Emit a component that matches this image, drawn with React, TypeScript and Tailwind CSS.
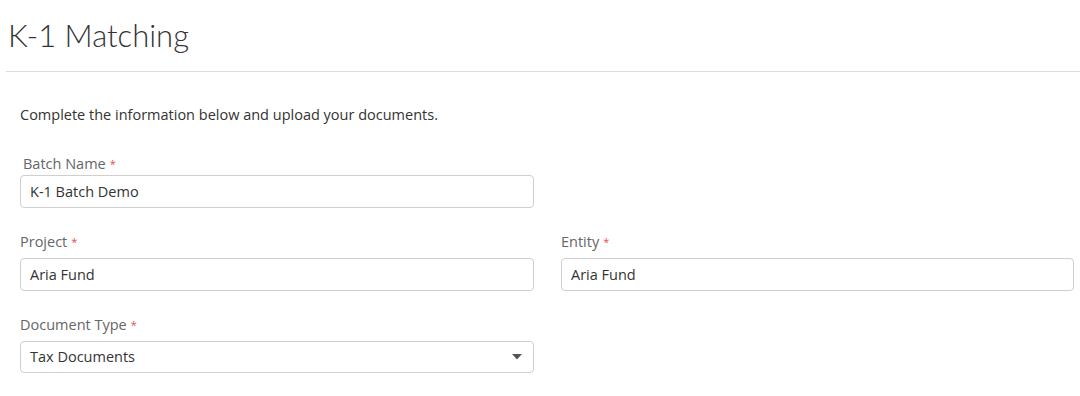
import React from "react";

function Label({ text, className = "" }: { text: string; className?: string }) {
  return (
    <div className={`h-[20px] text-[14.5px] leading-[20px] text-[#666] ${className}`}>
      {text}
      <span className="ml-[4px] text-[11px] align-top text-[#e35050]">*</span>
    </div>
  );
}

function Field({ value }: { value: string }) {
  return (
    <div className="flex h-[33px] items-center rounded-[4px] border border-[#cfcfcf] bg-white pl-[9px] text-[14.5px] text-[#333]">
      {value}
    </div>
  );
}

export default function App() {
  return (
    <div className="h-[396px] overflow-hidden bg-white font-['Open_Sans',sans-serif] text-[#333]">
      <div className="ml-[6px] flex h-[72px] items-start border-b border-[#dddddd] pl-[2px]">
        <h1 className="mt-[15px] font-['Lato',sans-serif] text-[31px] font-light leading-[40px] text-[#333]">K-1 Matching</h1>
      </div>
      <div className="pl-[20px]">
        <p className="mt-[33px] h-[20px] text-[14.5px] leading-[20px] text-[#333]">
          Complete the information below and upload your documents.
        </p>
        <div className="mt-[29px] w-[514px]">
          <Label text="Batch Name" className="mb-[1px] pl-[3px]" />
          <Field value="K-1 Batch Demo" />
        </div>
        <div className="mt-[24px] flex gap-[27px]">
          <div className="w-[514px] shrink-0">
            <Label text="Project" className="mb-[6px]" />
            <Field value="Aria Fund" />
          </div>
          <div className="w-[513px] shrink-0">
            <Label text="Entity" className="mb-[6px]" />
            <Field value="Aria Fund" />
          </div>
        </div>
        <div className="mt-[24px] w-[514px]">
          <Label text="Document Type" className="mb-[6px]" />
          <div className="flex h-[32px] items-center justify-between rounded-[4px] border border-[#cfcfcf] bg-white pl-[9px] pr-[11px] text-[14.5px] text-[#333]">
            <span>Tax Documents</span>
            <svg width="10" height="6" viewBox="0 0 10 6">
              <path d="M0 0 L10 0 L5 5.5 Z" fill="#555" />
            </svg>
          </div>
        </div>
      </div>
    </div>
  );
}
